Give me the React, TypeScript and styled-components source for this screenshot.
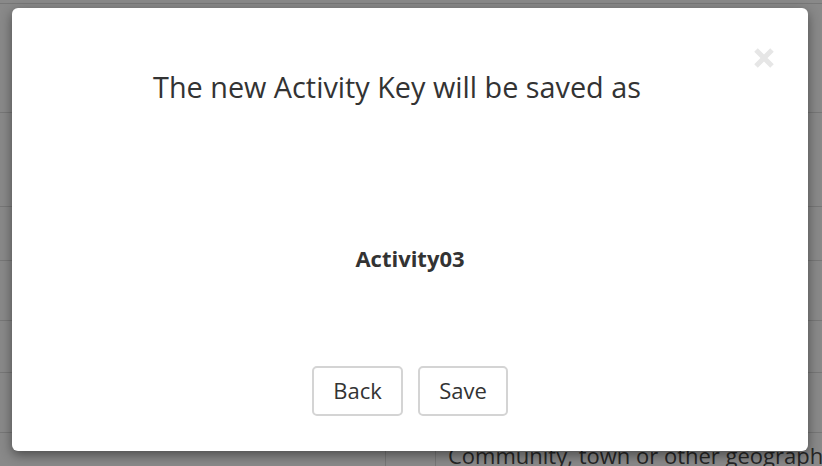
import React from "react";
import styled, { createGlobalStyle } from "styled-components";

const Global = createGlobalStyle`
  html, body { margin: 0; padding: 0; }
  body {
    width: 822px;
    height: 466px;
    overflow: hidden;
    font-family: "Open Sans", "Liberation Sans", sans-serif;
    background: #898989;
  }
`;

const Page = styled.div`
  position: relative;
  width: 822px;
  height: 466px;
  overflow: hidden;
  background: #898989;
`;

const Rows = styled.div`
  display: flex;
  flex-direction: column;
`;

const Row = styled.div<{ $h: number }>`
  height: ${(p) => p.$h}px;
  border-bottom: 1px solid #777777;
  box-sizing: border-box;
`;

const BottomRow = styled.div`
  display: grid;
  grid-template-columns: 385px 50px 1fr;
  height: 40px;
`;

const Cell = styled.div<{ $line?: boolean }>`
  border-left: ${(p) => (p.$line ? "1px solid #777777" : "none")};
  box-sizing: border-box;
`;

const CellText = styled.div`
  border-left: 1px solid #777777;
  padding: 8px 0 0 12px;
  font-size: 22px;
  line-height: 28px;
  color: #262626;
  white-space: nowrap;
  overflow: hidden;
`;

const Modal = styled.div`
  position: absolute;
  left: 12px;
  top: 8px;
  width: 796px;
  height: 443px;
  box-sizing: border-box;
  background: #ffffff;
  border-radius: 6px;
  box-shadow: 0 4px 12px rgba(0, 0, 0, 0.45);
  display: flex;
  flex-direction: column;
  align-items: center;
  padding-top: 62px;
`;

const Close = styled.button`
  position: absolute;
  right: 33px;
  top: 39px;
  width: 22px;
  height: 22px;
  padding: 0;
  border: 0;
  background: transparent;
  display: flex;
  cursor: pointer;
`;

const Title = styled.h4`
  margin: 0 26px 0 0;
  font-size: 28.8px;
  line-height: 34px;
  font-weight: 400;
  color: #333333;
  text-align: center;
`;

const KeyName = styled.div`
  margin-top: 141px;
  font-size: 22px;
  line-height: 26px;
  font-weight: 700;
  color: #333333;
`;

const Actions = styled.div`
  margin-top: 95px;
  display: flex;
  gap: 15px;
`;

const Button = styled.button<{ $w: number }>`
  width: ${(p) => p.$w}px;
  height: 50px;
  box-sizing: border-box;
  background: #ffffff;
  border: 2px solid #d4d4d4;
  border-radius: 5px;
  font-family: "Open Sans", "Liberation Sans", sans-serif;
  font-size: 22px;
  color: #333333;
  padding: 0 0 2px;
  cursor: pointer;
`;

export default function App() {
  return (
    <Page>
      <Global />
      <Rows>
        <Row $h={4} />
        <Row $h={109} />
        <Row $h={94} />
        <Row $h={54} />
        <Row $h={60} />
        <Row $h={52} />
        <Row $h={60} />
        <BottomRow>
          <Cell />
          <Cell $line />
          <CellText>Community, town or other geographic</CellText>
        </BottomRow>
      </Rows>
      <Modal>
        <Close aria-label="Close">
          <svg width="22" height="22" viewBox="0 0 22 22">
            <path
              d="M3 3 L19 19 M19 3 L3 19"
              stroke="#e6e6e6"
              strokeWidth="5"
              strokeLinecap="butt"
            />
          </svg>
        </Close>
        <Title>The new Activity Key will be saved as</Title>
        <KeyName>Activity03</KeyName>
        <Actions>
          <Button $w={91}>Back</Button>
          <Button $w={90}>Save</Button>
        </Actions>
      </Modal>
    </Page>
  );
}
